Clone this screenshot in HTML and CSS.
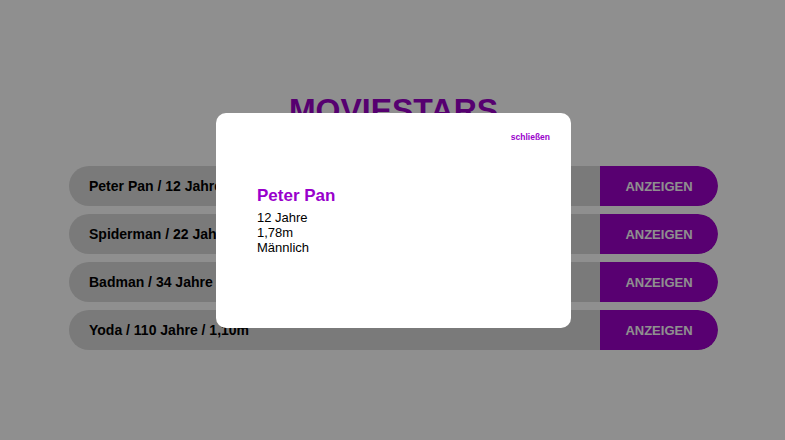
FILE: index.html
```html
<!DOCTYPE html>
<html lang="de">
<head>
    <meta charset="UTF-8">
    <meta name="viewport" content="width=device-width, initial-scale=1.0">
    <title>Moviestars</title>
    <link rel="stylesheet" href="styles.css">
</head>
<body>

    <div class="page">
        <h1 class="title">MOVIESTARS</h1>

        <ul class="star-list">
            <li class="star-row">
                <span class="star-info">Peter Pan / 12 Jahre / 1,78m</span>
                <button class="show-btn">ANZEIGEN</button>
            </li>
            <li class="star-row">
                <span class="star-info">Spiderman / 22 Jahre / 1,82m</span>
                <button class="show-btn">ANZEIGEN</button>
            </li>
            <li class="star-row">
                <span class="star-info">Badman / 34 Jahre / 1,88m</span>
                <button class="show-btn">ANZEIGEN</button>
            </li>
            <li class="star-row">
                <span class="star-info">Yoda / 110 Jahre / 1,10m</span>
                <button class="show-btn">ANZEIGEN</button>
            </li>
        </ul>
    </div>

    <!-- Detail dialog -->
    <div class="overlay">
        <div class="modal">
            <div class="modal-top">
                <a class="close-link">schließen</a>
            </div>
            <div class="modal-body">
                <h2 class="modal-name">Peter Pan</h2>
                <p>12 Jahre</p>
                <p>1,78m</p>
                <p>Männlich</p>
            </div>
        </div>
    </div>

</body>
</html>
```

FILE: styles.css
```css
* {
    margin: 0;
    padding: 0;
    box-sizing: border-box;
}

body, html {
    height: 100%;
    font-family: 'Liberation Sans', Arial, sans-serif;
    background-color: #fff;
    color: #000;
    overflow: hidden;
}

body {
    padding-left: 2px;
}

.page {
    width: 649px;
    margin: 0 auto;
    padding-top: 90px;
}

.title {
    text-align: center;
    font-size: 32px;
    font-weight: 700;
    line-height: 40px;
    color: #9a00c8;
}

.star-list {
    list-style: none;
    margin-top: 36px;
    display: flex;
    flex-direction: column;
    gap: 8px;
}

.star-row {
    display: flex;
    align-items: center;
    height: 40px;
    background: #dadada;
    border-radius: 20px;
    overflow: hidden;
}

.star-info {
    flex: 1;
    padding-left: 20px;
    font-size: 14px;
    font-weight: 700;
}

.show-btn {
    width: 118px;
    height: 100%;
    border: none;
    background: #9d00c9;
    color: #fff;
    font-family: inherit;
    font-size: 13px;
    font-weight: 700;
    border-radius: 0 20px 20px 0;
}

.overlay {
    position: fixed;
    inset: 0;
    padding-left: 2px;
    background: rgba(0, 0, 0, 0.44);
    display: flex;
    align-items: center;
    justify-content: center;
}

.modal {
    width: 355px;
    height: 215px;
    background: #fff;
    border-radius: 10px;
    padding: 16px 21px;
}

.modal-top {
    text-align: right;
    line-height: 12px;
}

.close-link {
    font-size: 8.5px;
    font-weight: 700;
    color: #9a00cc;
    cursor: pointer;
}

.modal-body {
    padding-left: 20px;
    margin-top: 43px;
    font-size: 13px;
    line-height: 15px;
}

.modal-name {
    font-size: 17px;
    font-weight: 700;
    color: #9900cc;
    line-height: 20px;
    margin-bottom: 4px;
}
```
